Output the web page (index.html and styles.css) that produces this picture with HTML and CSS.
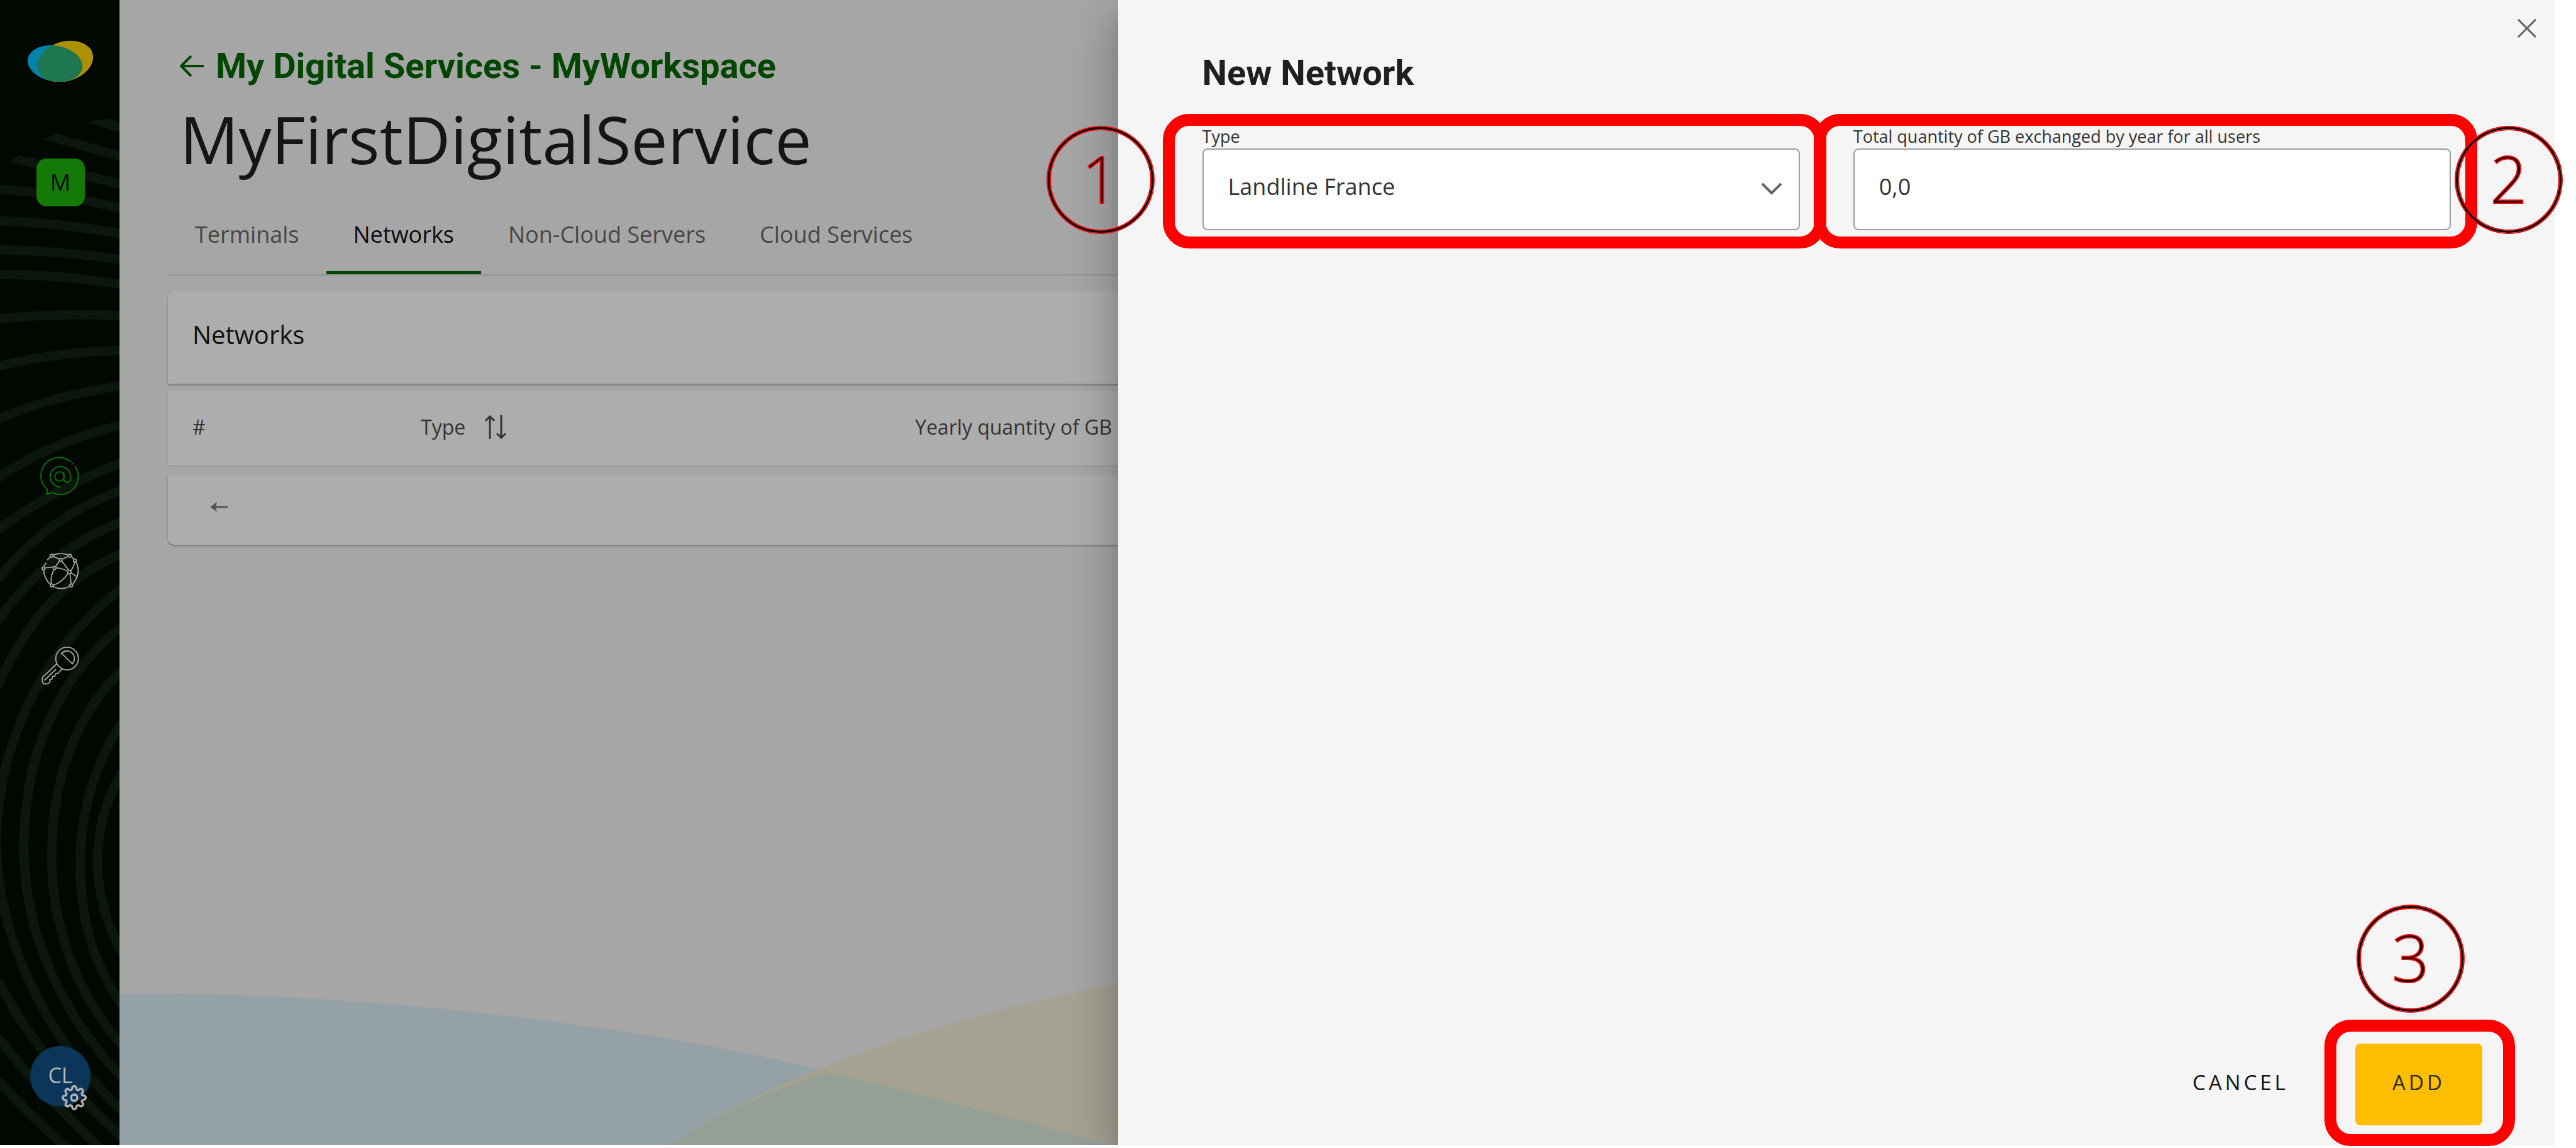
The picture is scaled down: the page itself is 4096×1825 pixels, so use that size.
FILE: index.html
```html
<!DOCTYPE html>
<html lang="en">
<head>
<meta charset="utf-8">
<title>MyFirstDigitalService</title>
<link rel="stylesheet" href="styles.css">
</head>
<body>
<div class="app">
  <aside class="sidebar">
    <svg class="rings" viewBox="0 0 206 1971" preserveAspectRatio="xMinYMin slice" aria-hidden="true">
      <path class="tip" d="M150 210L183 204.500L206 209V228ZM74 240L97 230L206 260V277ZM16 279L33 267L206 308V325Z"/>
      <path d="M-4 326Q100 331 210 360M-4 380Q100 383 210 403M-4 430Q100 431 210 447M-4 473Q100 472 210 490M-4 549Q90 539 210 543M-4 631Q90 607 210 603M-4 722Q90 681 210 664M-4 823Q90 760 210 731M-4 912Q90 843 210 796M-4 998Q80 890 210 844M-4 1070Q80 948 210 898M-4 1182Q70 1010 210 953"/>
      <path d="M210 1012C60 1130-6 1300-6 1450C-6 1620 90 1800 210 1912M210 1079C90 1170 41 1320 41 1459C41 1610 110 1750 210 1855M210 1154C120 1240 89 1360 89 1476C89 1590 130 1710 210 1799M210 1244C160 1320 138 1400 138 1488C138 1580 160 1660 210 1730M210 1330Q168 1400 168 1484Q168 1560 210 1640"/>
      <path d="M-4 1688Q70 1830 210 1958M-4 1785Q60 1870 175 1980M-4 1860Q50 1920 120 1980"/>
    </svg>
    <svg class="logo" viewBox="0 0 104 66" role="img" aria-label="Logo">
      <clipPath id="lens"><ellipse cx="43.500" cy="37" rx="44" ry="28.500" transform="rotate(10 43.500 37)"/></clipPath>
      <ellipse cx="43.500" cy="37" rx="44" ry="28.500" transform="rotate(10 43.500 37)" fill="#0082ae"/>
      <ellipse cx="59.500" cy="33.500" rx="45.500" ry="31.500" transform="rotate(-16 59.500 33.500)" fill="#ae9100"/>
      <g clip-path="url(#lens)"><ellipse cx="59.500" cy="33.500" rx="45.500" ry="31.500" transform="rotate(-16 59.500 33.500)" fill="#1e7750"/></g>
    </svg>
    <a class="workspace" href="#">M</a>
    <nav class="menu">
      <a class="menu-link active" href="#" aria-label="Digital services">
        <svg class="menu-icon" viewBox="0 0 65 65"><path d="M50 6.500A31 31 0 0 0 10 54L9 62.500L18 59.500A31 31 0 0 0 57.500 14M53 9.200L54.500 10.500M38.500 23.500V36.500A5.700 5.700 0 0 0 50 36.500V32.500A17.500 17.500 0 1 0 33 50"/><circle cx="31" cy="32" r="8"/></svg>
      </a>
      <a class="menu-link" href="#" aria-label="Network">
        <svg class="menu-icon" viewBox="0 0 65 65"><path d="M20 4.500Q33 0 46 4.500M52 8L55 11M59.500 17Q69 35 54 55M48 59Q34 66 20 59M15 55Q5 46 3.500 30M4.500 24L8 18M10 13L15 8M20 7L31 12M47 7L35 12M31 15L24 25M35 15L47 31M22 25L5 27M25 27Q35 27 46 33M22 29Q15 40 17 55M46 36Q35 52 20 57M49 37L51 54M50 32Q55 27 57 17M50 35L61 42M51 7L56 12"/><circle cx="17.500" cy="6" r="2.500"/><circle cx="49" cy="6" r="2.500"/><circle cx="33" cy="13" r="2.500"/><circle cx="57.500" cy="14" r="2.500"/><circle cx="3.500" cy="27.500" r="2.500"/><circle cx="22.500" cy="27" r="2.500"/><circle cx="48" cy="34" r="3"/><circle cx="17.500" cy="57" r="2.500"/><circle cx="51" cy="57" r="2.500"/></svg>
      </a>
      <a class="menu-link" href="#" aria-label="Access">
        <svg class="menu-icon" viewBox="0 0 65 65"><circle cx="44" cy="20.500" r="19.500"/><path d="M34.500 11.500Q44 3 54 12Q60 22 53 29.500ZM27 29L1.500 53L1.500 61L4 64H11L15 60L14 57L18 56L19 51L23 51L24 47L28 46L36 38.500M5 58L25 39"/></svg>
      </a>
    </nav>
    <a class="avatar" href="#" aria-label="Account settings">CL
      <svg class="gear" viewBox="0 0 24 24"><circle cx="12" cy="12" r="3"/><path d="M19.400 15a1.650 1.650 0 0 0 .33 1.820l.06.06a2 2 0 0 1 0 2.830 2 2 0 0 1-2.830 0l-.06-.06a1.650 1.650 0 0 0-1.820-.33 1.650 1.650 0 0 0-1 1.510V21a2 2 0 0 1-2 2 2 2 0 0 1-2-2v-.09A1.650 1.650 0 0 0 9 19.400a1.650 1.650 0 0 0-1.820.33l-.06.06a2 2 0 0 1-2.830 0 2 2 0 0 1 0-2.830l.06-.06a1.650 1.650 0 0 0 .33-1.820 1.650 1.650 0 0 0-1.510-1H3a2 2 0 0 1-2-2 2 2 0 0 1 2-2h.09A1.650 1.650 0 0 0 4.600 9a1.650 1.650 0 0 0-.33-1.820l-.06-.06a2 2 0 0 1 0-2.830 2 2 0 0 1 2.830 0l.06.06a1.650 1.650 0 0 0 1.820.33H9a1.650 1.650 0 0 0 1-1.510V3a2 2 0 0 1 2-2 2 2 0 0 1 2 2v.09a1.650 1.650 0 0 0 1 1.510 1.650 1.650 0 0 0 1.820-.33l.06-.06a2 2 0 0 1 2.830 0 2 2 0 0 1 0 2.830l-.06.06a1.650 1.650 0 0 0-.33 1.820V9a1.650 1.650 0 0 0 1.510 1H21a2 2 0 0 1 2 2 2 2 0 0 1-2 2h-.09a1.650 1.650 0 0 0-1.510 1z"/></svg>
    </a>
  </aside>

  <main class="main">
    <svg class="waves" viewBox="0 0 1590 260" aria-hidden="true">
      <path fill="#94a1a7" d="M0 20C360 14 840 70 1131 145C1300 187 1440 221 1571 260H0Z"/>
      <path fill="#a5a293" d="M873 260C1060 144 1290 62 1590 2V260Z"/>
      <path fill="#959f95" d="M873 260C950 212 1036 172 1131 145C1300 187 1440 221 1571 260Z"/>
    </svg>
    <a class="back" href="#">
      <svg class="back-icon" viewBox="0 0 38 34"><path d="M18 1L2 17L18 33M2 17H38"/></svg>
      <span>My Digital Services - MyWorkspace</span>
    </a>
    <h1 class="title">MyFirstDigitalService</h1>
    <nav class="tabs">
      <a class="tab" href="#">Terminals</a>
      <a class="tab current" href="#">Networks</a>
      <a class="tab" href="#">Non-Cloud Servers</a>
      <a class="tab" href="#">Cloud Services</a>
    </nav>
    <section class="listing">
      <h2 class="listing-head">Networks</h2>
      <table class="grid">
        <thead>
          <tr>
            <th class="col-number">#</th>
            <th class="col-type"><span class="sortable">Type
              <svg class="sort-icon" viewBox="0 0 36 38"><path d="M9 38V2M2 9L9 2L16 9M27 0V36M20 29L27 36L34 29"/></svg></span></th>
            <th>Yearly quantity of GB</th>
          </tr>
        </thead>
      </table>
      <div class="listing-foot">
        <button class="prev" type="button" aria-label="Previous">
          <svg class="prev-icon" viewBox="0 0 28 16"><path class="head" d="M0 8L11 0L9 8L11 16Z"/><path d="M8 8H28"/></svg>
        </button>
      </div>
    </section>
    <div class="shade"></div>
  </main>

  <form class="drawer">
    <button class="close" type="button" aria-label="Close">
      <svg class="close-icon" viewBox="0 0 30 30"><path d="M1 1L29 29M29 1L1 29"/></svg>
    </button>
    <h2 class="drawer-title">New Network</h2>
    <div class="fields">
      <div class="field">
        <label class="label" for="type">Type</label>
        <div class="select-wrap">
          <select class="control" id="type"><option>Landline France</option></select>
          <svg class="chevron" viewBox="0 0 34 20"><path d="M2 2L17 17L32 2"/></svg>
        </div>
        <span class="frame frame-field"></span>
        <span class="step step-one">1</span>
      </div>
      <div class="field">
        <label class="label" for="quantity">Total quantity of GB exchanged by year for all users</label>
        <input class="control" id="quantity" type="text" value="0,0">
        <span class="frame frame-field"></span>
        <span class="step step-two">2</span>
      </div>
    </div>
    <div class="actions">
      <button class="button" type="button">CANCEL</button>
      <div class="primary">
        <button class="button add" type="button">ADD</button>
        <span class="frame frame-add"></span>
        <span class="step step-three">3</span>
      </div>
    </div>
  </form>
</div>
</body>
</html>
```

FILE: styles.css
```css
* { box-sizing: border-box; }

body {
  margin: 0;
  background: #fff;
  color: #111;
  font-family: "Open Sans", "Noto Sans", sans-serif;
  overflow: hidden;
}

a { color: inherit; text-decoration: none; }
h1, h2 { margin: 0; font-weight: 400; }
svg { display: block; fill: none; stroke: none; flex: none; }
button { padding: 0; border: 0; background: none; font: inherit; }

.app {
  display: flex;
  height: 100vh;
  padding: 0 33px 5px 0;
}

/* Sidebar */
.sidebar {
  position: relative;
  display: flex;
  flex-direction: column;
  align-items: center;
  flex: none;
  width: 190px;
  padding: 64px 0 61px 2px;
  background: #000800;
  overflow: hidden;
}
.sidebar > * { position: relative; }
.sidebar > .rings {
  position: absolute;
  inset: 0;
  width: 100%;
  height: 100%;
  stroke: #0c160d;
  stroke-width: 16;
}
.rings .tip { fill: #0c160d; stroke: none; }
.logo { width: 104px; height: 66px; }
.workspace {
  width: 77px;
  margin-top: 122px;
  border-radius: 16px;
  background: #137a08;
  color: #000800;
  font-size: 36px;
  line-height: 76px;
  text-align: center;
}
.menu {
  display: flex;
  flex-direction: column;
  gap: 90px;
  margin-top: 400px;
}
.menu-icon {
  width: 60px;
  height: 60px;
  overflow: visible;
  stroke: #a3a5a3;
  stroke-width: 2;
}
.active .menu-icon { stroke: #007a00; stroke-width: 2; }
.avatar {
  width: 96px;
  margin-top: auto;
  border-radius: 50%;
  background: #0b3659;
  color: #b4b8bb;
  font-size: 34px;
  line-height: 92px;
  height: 96px;
  text-align: center;
}
.gear {
  position: absolute;
  right: 6px;
  bottom: -6px;
  width: 40px;
  height: 40px;
  stroke: #b4b4b4;
  stroke-width: 2;
}

/* Page behind the drawer */
.main {
  position: relative;
  flex: 1;
  min-width: 0;
  padding: 73px 0 0 77px;
  background: #a6a6a6;
  overflow: hidden;
}
.waves {
  position: absolute;
  left: 0;
  bottom: 0;
  width: 1590px;
  height: 260px;
}
.back {
  display: flex;
  align-items: center;
  gap: 19px;
  margin: 0 19px 15px;
  color: #004500;
  font: 700 56px/64px Roboto, sans-serif;
}
.back-icon {
  width: 38px;
  height: 34px;
  stroke: #004500;
  stroke-width: 4;
}
.title {
  margin: 0 19px;
  color: #141616;
  font-size: 104px;
  line-height: 138px;
}
.tabs {
  display: flex;
  padding-top: 59px;
  border-bottom: 2px solid #949494;
}
.tab {
  padding: 0 43px 34px;
  border-bottom: 5px solid transparent;
  color: #474747;
  font-size: 36px;
  line-height: 48px;
}
.tab.current { border-color: #004500; color: #0c0c0c; }

.listing { margin-top: 25px; }
.listing-head, .grid, .listing-foot {
  background: #adadad;
  box-shadow: 0 2px 3px rgba(0, 0, 0, .3);
}
.listing-head {
  margin-bottom: 12px;
  padding: 0 39px 10px;
  border-radius: 10px 0 0 0;
  font-size: 40px;
  line-height: 137px;
}
.grid {
  width: 100%;
  height: 118px;
  margin-bottom: 15px;
  border-spacing: 0;
  table-layout: fixed;
  color: #333;
  box-shadow: 0 1px 2px rgba(0, 0, 0, .15);
}
.grid th {
  padding: 0 0 4px 39px;
  font-size: 32px;
  font-weight: 400;
  line-height: 44px;
  text-align: left;
  white-space: nowrap;
}
.col-number { width: 363px; }
.col-type { width: 786px; }
.sortable { display: flex; align-items: center; gap: 30px; }
.sort-icon { width: 36px; height: 38px; stroke: #333; stroke-width: 3; }
.listing-foot {
  display: flex;
  align-items: center;
  height: 111px;
  padding: 0 0 10px 67px;
  border-radius: 0 0 0 10px;
}
.prev-icon { width: 28px; height: 16px; stroke: #555; stroke-width: 3; }
.prev-icon .head { fill: #555; stroke: none; }

.shade {
  position: absolute;
  top: 0;
  bottom: 0;
  left: 100%;
  width: 200px;
  box-shadow: 0 20px 25px -13px rgba(0, 0, 0, .2), 0 41px 61px 5px rgba(0, 0, 0, .14), 0 15px 76px 13px rgba(0, 0, 0, .12);
}

/* Drawer */
.drawer {
  position: relative;
  display: flex;
  flex-direction: column;
  flex: none;
  width: 56.25%;
  padding: 30px 0 31px;
  background: #f5f5f5;
}
.close { align-self: flex-end; margin-right: 30px; }
.close-icon { width: 30px; height: 30px; stroke: #606060; stroke-width: 3; }
.drawer-title {
  margin: 24px 134px 51px;
  color: #1f1f1f;
  font: 700 56px/64px Roboto, sans-serif;
}
.fields {
  display: grid;
  grid-template-columns: 1fr 1fr;
  gap: 85px;
  padding: 0 166px 0 134px;
}
.field { position: relative; }
.label {
  display: block;
  margin-bottom: 1px;
  color: #333;
  font-size: 27px;
  line-height: 36px;
}
.select-wrap { position: relative; }
.control {
  display: block;
  width: 100%;
  height: 130px;
  padding: 0 39px 10px;
  border: 2px solid #9e9e9e;
  border-radius: 8px;
  background: #fff;
  color: #333;
  font: 36px "Open Sans", sans-serif;
  appearance: none;
}
.chevron {
  position: absolute;
  top: 54px;
  right: 28px;
  width: 34px;
  height: 20px;
  stroke: #666;
  stroke-width: 4;
  pointer-events: none;
}
.actions {
  display: flex;
  align-items: center;
  justify-content: flex-end;
  gap: 106px;
  margin-top: auto;
  padding-right: 116px;
}
.button {
  padding-bottom: 8px;
  color: #141414;
  font-size: 33px;
  letter-spacing: 5px;
}
.primary { position: relative; }
.add {
  display: block;
  width: 202px;
  height: 130px;
  border-radius: 8px;
  background: #ffbf00;
  color: #2b2b1c;
}

/* Guide marks over the controls */
.frame {
  position: absolute;
  border: 19px solid #f00;
  border-radius: 42px;
  pointer-events: none;
}
.frame-field { inset: -18px -42px -29px -63px; }
.frame-add { inset: -38px -52px -33px -49px; }
.step {
  position: absolute;
  width: 168px;
  height: 168px;
  border: 3px solid #000;
  border-radius: 50%;
  box-shadow: 0 0 0 2px #f00, inset 0 0 0 2px #f00;
  color: #000;
  font-size: 103px;
  font-weight: 300;
  line-height: 156px;
  text-align: center;
  -webkit-text-stroke: 2px #f00;
}
.step-one { top: 3px; left: -246px; }
.step-two { top: 3px; right: -176px; }
.step-three { top: -219px; left: 4px; }
```
